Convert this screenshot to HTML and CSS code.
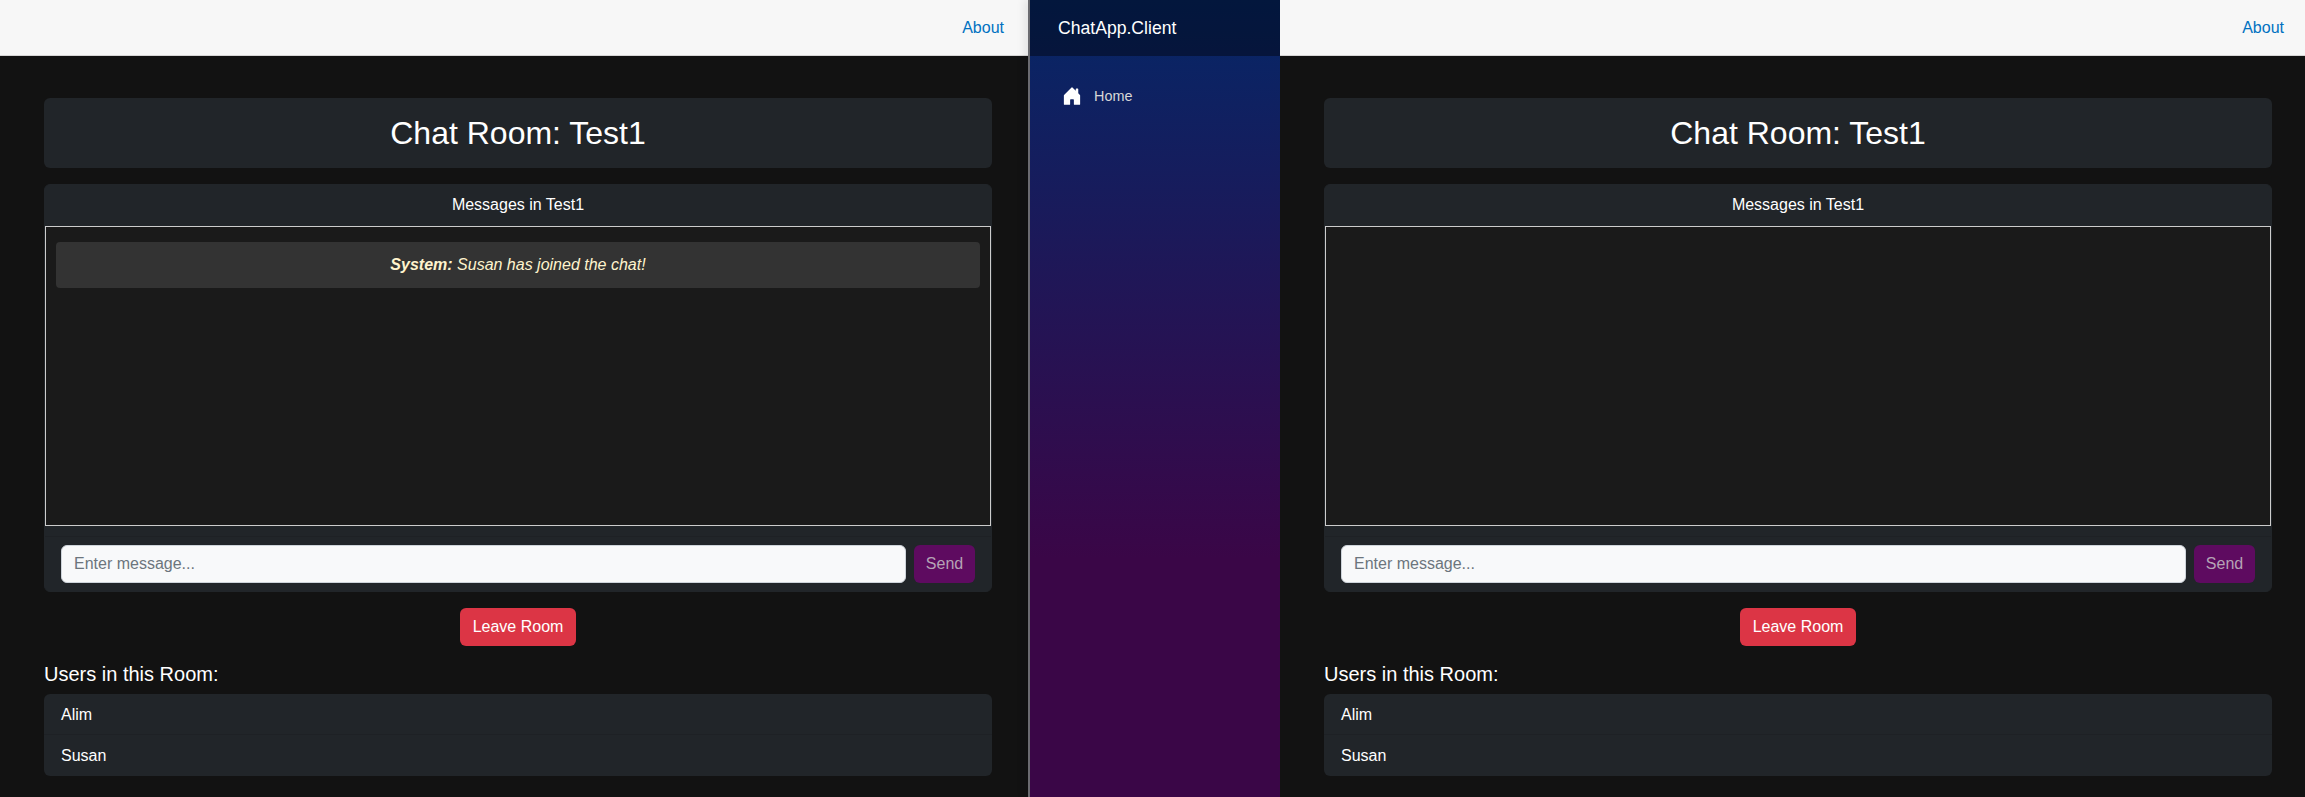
FILE: index.html
```html
<!DOCTYPE html>
<html lang="en">
<head>
    <meta charset="UTF-8">
    <meta name="viewport" content="width=device-width, initial-scale=1.0">
    <title>ChatApp.Client</title>
    <link rel="stylesheet" href="styles.css">
</head>
<body>
    <div class="desktop">
        <main class="pane">
            <div class="top-row"><a class="about" href="#">About</a></div>
            <div class="content">
                <h2 class="room-title">Chat Room: Test1</h2>
                <section class="chat-card">
                    <div class="chat-header">Messages in Test1</div>
                    <div class="chat-box">
                        <div class="message"><strong>System:</strong> Susan has joined the chat!</div>
                    </div>
                    <div class="chat-footer">
                        <input class="message-input" type="text" placeholder="Enter message...">
                        <button class="send-button">Send</button>
                    </div>
                </section>
                <div class="leave-row"><button class="leave-button">Leave Room</button></div>
                <h4 class="users-title">Users in this Room:</h4>
                <ul class="user-list">
                    <li>Alim</li>
                    <li>Susan</li>
                </ul>
            </div>
        </main>

        <nav class="sidebar">
            <div class="brand-row">ChatApp.Client</div>
            <a class="nav-link" href="#">
                <svg class="home-icon" viewBox="0 0 16 16" fill="#fff"><path d="M6.5 14.5v-3.505c0-.245.25-.495.5-.495h2c.25 0 .5.25.5.5v3.5a.5.5 0 0 0 .5.5h4a.5.5 0 0 0 .5-.5v-7a.5.5 0 0 0-.146-.354L13 5.793V2.5a.5.5 0 0 0-.5-.5h-1a.5.5 0 0 0-.5.5v1.293L8.354 1.146a.5.5 0 0 0-.708 0l-6 6A.5.5 0 0 0 1.5 7.5v7a.5.5 0 0 0 .5.5h4a.5.5 0 0 0 .5-.5Z"/></svg>
                Home
            </a>
        </nav>

        <main class="pane">
            <div class="top-row"><a class="about" href="#">About</a></div>
            <div class="content">
                <h2 class="room-title">Chat Room: Test1</h2>
                <section class="chat-card">
                    <div class="chat-header">Messages in Test1</div>
                    <div class="chat-box"></div>
                    <div class="chat-footer">
                        <input class="message-input" type="text" placeholder="Enter message...">
                        <button class="send-button">Send</button>
                    </div>
                </section>
                <div class="leave-row"><button class="leave-button">Leave Room</button></div>
                <h4 class="users-title">Users in this Room:</h4>
                <ul class="user-list">
                    <li>Alim</li>
                    <li>Susan</li>
                </ul>
            </div>
        </main>
    </div>
</body>
</html>
```

FILE: styles.css
```css
* {
    box-sizing: border-box;
}

body {
    margin: 0;
    font-family: "Liberation Sans", Arial, sans-serif;
    font-size: 16px;
    line-height: 24px;
    color: #fff;
    background-color: #121212;
}

.desktop {
    display: flex;
    height: 797px;
    overflow: hidden;
}

/* Both chat windows are the same width, the second one runs off the screen */
.pane {
    flex: 0 0 1028px;
    min-width: 0;
    background-color: #121212;
}

.top-row {
    display: flex;
    align-items: center;
    justify-content: flex-end;
    height: 56px;
    padding: 0 24px;
    background-color: #f7f7f7;
    border-bottom: 1px solid #d6d5d5;
}

.about {
    color: #0071c1;
    text-decoration: none;
}

.content {
    padding: 42px 36px 0 44px;
}

.room-title {
    margin: 0 0 16px;
    height: 70px;
    line-height: 70px;
    font-size: 32px;
    font-weight: 400;
    text-align: center;
    background-color: #212529;
    border-radius: 6px;
}

.chat-card {
    background-color: #212529;
    border: 1px solid #212529;
    border-radius: 6px;
}

.chat-header {
    height: 41px;
    line-height: 39px;
    text-align: center;
}

.chat-box {
    height: 300px;
    margin-bottom: 10px;
    padding: 15px 10px;
    background-color: #1a1a1a;
    border: 1px solid #ccc;
}

.message {
    height: 46px;
    line-height: 46px;
    text-align: center;
    font-style: italic;
    color: #fff3cd;
    background-color: #333;
    border-radius: 4px;
}

.chat-footer {
    display: flex;
    gap: 8px;
    padding: 8px 16px;
    border-top: 1px solid #1e2125;
}

.message-input {
    flex: 1;
    min-width: 0;
    height: 38px;
    padding: 6px 12px;
    font-family: inherit;
    font-size: 16px;
    background-color: #f8f9fa;
    border: 1px solid #ced4da;
    border-radius: 6px;
}

.message-input::placeholder {
    color: #6c757d;
}

.send-button {
    width: 61px;
    height: 38px;
    padding: 0;
    font-family: inherit;
    font-size: 16px;
    color: #b5a3b6;
    background-color: #5e0b60;
    border: none;
    border-radius: 6px;
}

.leave-row {
    margin-top: 16px;
    text-align: center;
}

.leave-button {
    width: 116px;
    height: 38px;
    padding: 0;
    font-family: inherit;
    font-size: 16px;
    color: #fff;
    background-color: #dc3545;
    border: none;
    border-radius: 6px;
}

.users-title {
    margin: 16px 0 8px;
    font-size: 20px;
    font-weight: 400;
}

.user-list {
    margin: 0;
    padding: 0;
    list-style: none;
    background-color: #212529;
    border-radius: 6px;
}

.user-list li {
    height: 41px;
    padding: 9px 17px 7px;
    border-bottom: 1px solid #1e2125;
}

.user-list li:last-child {
    border-bottom: none;
}

.sidebar {
    flex: 0 0 252px;
    border-left: 2px solid #6b6b70;
    box-shadow: -4px 0 8px rgba(0, 0, 0, 0.08);
    background-image: linear-gradient(180deg, #052767 0%, #3a0647 70%);
}

.brand-row {
    height: 56px;
    padding-left: 28px;
    line-height: 56px;
    font-size: 17.6px;
    background-color: rgba(0, 0, 0, 0.4);
}

.nav-link {
    display: flex;
    align-items: center;
    gap: 12px;
    margin-top: 16px;
    padding-left: 32px;
    height: 48px;
    font-size: 14.4px;
    color: #d7d7d7;
    text-decoration: none;
}

.home-icon {
    width: 20px;
    height: 20px;
}
```
